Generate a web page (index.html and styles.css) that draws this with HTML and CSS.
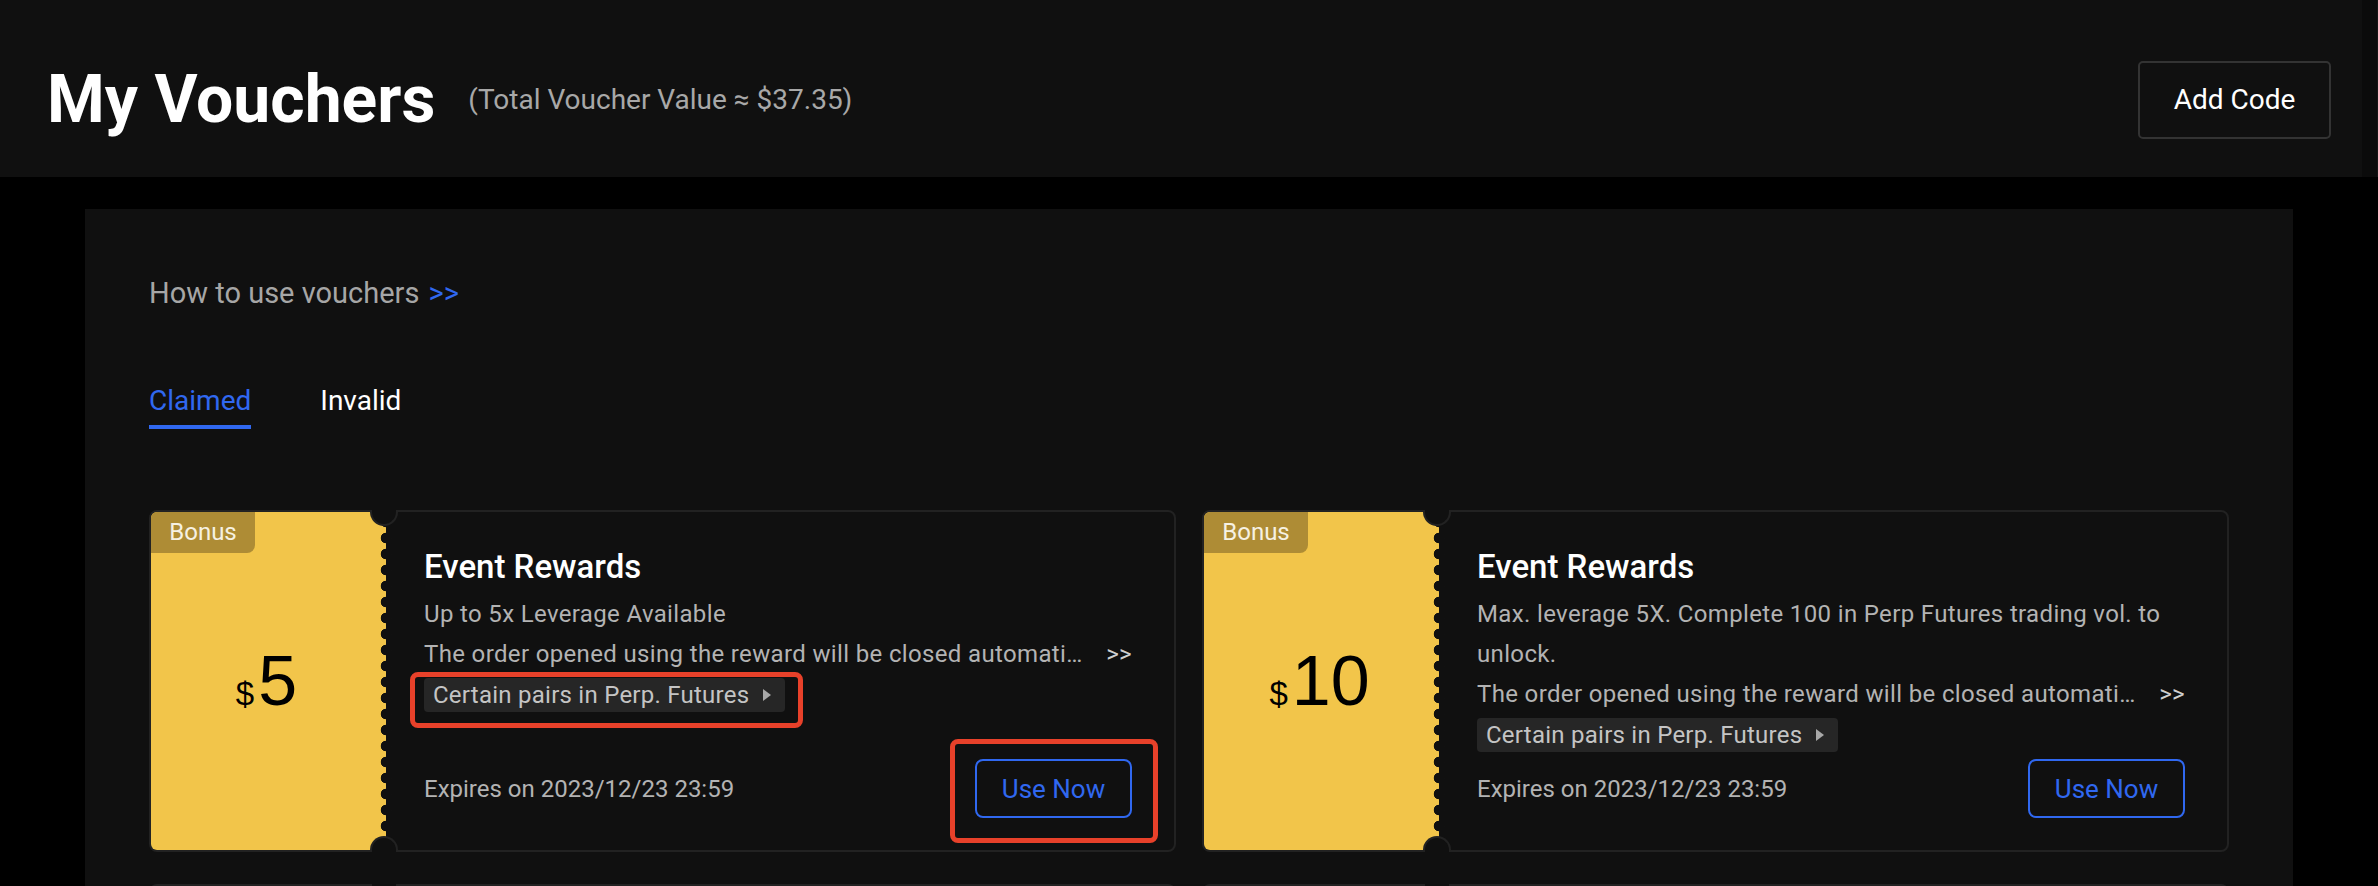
FILE: index.html
```html
<!DOCTYPE html>
<html lang="en">
<head>
<meta charset="utf-8">
<title>My Vouchers</title>
<link rel="stylesheet" href="styles.css">
</head>
<body>
<header class="header">
  <div class="header-inner">
    <h1 class="title">My Vouchers</h1>
    <span class="total">(Total Voucher Value ≈ $37.35)</span>
    <button class="add-code">Add Code</button>
  </div>
  <div class="header-scroll"></div>
</header>

<main class="panel">
  <p class="howto">How to use vouchers <a class="howto-link">&gt;&gt;</a></p>

  <nav class="tabs">
    <span class="tab active">Claimed</span>
    <span class="tab">Invalid</span>
  </nav>

  <section class="cards">
    <article class="card">
      <div class="ticket">
        <span class="bonus">Bonus</span>
        <div class="price"><span class="cur">$</span><span class="amt">5</span></div>
      </div>
      <span class="notch notch-top"></span>
      <span class="notch notch-bottom"></span>
      <div class="body">
        <h2 class="card-title">Event Rewards</h2>
        <p class="desc">Up to 5x Leverage Available</p>
        <div class="desc-row">
          <span class="desc-trunc">The order opened using the reward will be closed automatically when the voucher expires.</span>
          <span class="more">&gt;&gt;</span>
        </div>
        <div class="chip-wrap">
          <span class="chip">Certain pairs in Perp. Futures <span class="tri"></span><span class="annot annot-chip"></span></span>
        </div>
        <div class="footer">
          <span class="expires">Expires on 2023/12/23 23:59</span>
          <button class="use-now">Use Now<span class="annot annot-btn"></span></button>
        </div>
      </div>
    </article>

    <article class="card">
      <div class="ticket">
        <span class="bonus">Bonus</span>
        <div class="price"><span class="cur">$</span><span class="amt">10</span></div>
      </div>
      <span class="notch notch-top"></span>
      <span class="notch notch-bottom"></span>
      <div class="body">
        <h2 class="card-title">Event Rewards</h2>
        <p class="desc">Max. leverage 5X. Complete 100 in Perp Futures trading vol. to unlock.</p>
        <div class="desc-row">
          <span class="desc-trunc">The order opened using the reward will be closed automatically when the voucher expires.</span>
          <span class="more">&gt;&gt;</span>
        </div>
        <div class="chip-wrap">
          <span class="chip">Certain pairs in Perp. Futures <span class="tri"></span></span>
        </div>
        <div class="footer">
          <span class="expires">Expires on 2023/12/23 23:59</span>
          <button class="use-now">Use Now</button>
        </div>
      </div>
    </article>

    <article class="card">
      <div class="ticket">
        <span class="bonus">Bonus</span>
        <div class="price"><span class="cur">$</span><span class="amt">10</span></div>
      </div>
      <span class="notch notch-top"></span>
      <span class="notch notch-bottom"></span>
      <div class="body"></div>
    </article>

    <article class="card">
      <div class="ticket">
        <span class="bonus">Bonus</span>
        <div class="price"><span class="cur">$</span><span class="amt">10</span></div>
      </div>
      <span class="notch notch-top"></span>
      <span class="notch notch-bottom"></span>
      <div class="body"></div>
    </article>
  </section>
</main>
</body>
</html>
```

FILE: styles.css
```css
* { box-sizing: border-box; }

html, body {
  margin: 0;
  padding: 0;
  background: #000;
  height: 886px;
  overflow: hidden;
}

body {
  font-family: Roboto, "Noto Sans", sans-serif;
  color: #fff;
}

.header {
  display: flex;
  height: 177px;
}

.header-inner {
  flex: 1;
  display: flex;
  align-items: center;
  background: #101010;
  padding: 22px 31px 0 47px;
}

.header-scroll {
  width: 16px;
  background: #0b0b0b;
  border-right: 1px solid #151515;
}

.title {
  margin: 0;
  font-size: 66px;
  font-weight: 700;
  line-height: 1;
  letter-spacing: 0;
}

.total {
  margin-left: 33px;
  font-size: 28px;
  color: #a8a8a8;
}

.add-code {
  margin-left: auto;
  width: 193px;
  height: 78px;
  background: transparent;
  border: 2px solid #333;
  border-radius: 5px;
  color: #fff;
  font-family: inherit;
  font-size: 28px;
}

.panel {
  margin: 32px 0 0 85px;
  width: 2208px;
  height: 700px;
  background: #101010;
  padding: 64px 64px 0 64px;
}

.howto {
  margin: 0;
  font-size: 29px;
  line-height: 40px;
  color: #a6a6a6;
}

.howto-link {
  color: #3068f0;
  margin-left: 2px;
}

.tabs {
  display: flex;
  gap: 69px;
  margin-top: 68px;
}

.tab {
  font-size: 28px;
  line-height: 40px;
  padding-bottom: 4px;
  border-bottom: 4px solid transparent;
  color: #fff;
}

.tab.active {
  color: #3068f0;
  border-bottom-color: #3068f0;
}

.cards {
  display: grid;
  grid-template-columns: minmax(0, 1fr) minmax(0, 1fr);
  column-gap: 26px;
  row-gap: 32px;
  margin-top: 81px;
}

.card {
  position: relative;
  display: flex;
  height: 342px;
  border: 2px solid #222;
  border-radius: 8px;
  min-width: 0;
}

.ticket {
  position: relative;
  flex: none;
  width: 235px;
  background: #f2c54a;
  border-radius: 6px 0 0 6px;
  display: flex;
  align-items: center;
  justify-content: center;
}

.ticket::after {
  content: "";
  position: absolute;
  top: 0;
  bottom: 0;
  right: -6px;
  width: 12px;
  background: radial-gradient(circle at 6px 8px, #101010 5px, transparent 5.6px) 0 2px / 12px 16px repeat-y;
}

.bonus {
  position: absolute;
  top: 0;
  left: 0;
  width: 104px;
  height: 41px;
  background: #ae8c35;
  border-radius: 6px 0 8px 0;
  color: #f6f1e2;
  font-size: 24px;
  line-height: 41px;
  text-align: center;
}

.price {
  display: flex;
  align-items: baseline;
  color: #000;
  font-family: "Liberation Sans", Arial, sans-serif;
  margin-right: 4px;
}

.cur {
  font-size: 33px;
  margin-right: 4px;
}

.amt {
  font-size: 70px;
  line-height: 1;
}

.notch {
  position: absolute;
  left: 219px;
  width: 28px;
  height: 16px;
  background: #101010;
  border: 2px solid #222;
  z-index: 2;
}

.notch-top {
  top: -2px;
  border-top: none;
  border-radius: 0 0 14px 14px;
}

.notch-bottom {
  bottom: -2px;
  border-bottom: none;
  border-radius: 14px 14px 0 0;
}

.body {
  flex: 1;
  min-width: 0;
  display: flex;
  flex-direction: column;
  align-items: flex-start;
  padding: 35px 42px 32px 38px;
}

.card-title {
  margin: 0;
  font-size: 33px;
  font-weight: 500;
  line-height: 40px;
  color: #fff;
}

.desc {
  margin: 7px 0 0;
  font-size: 24px;
  letter-spacing: 0.35px;
  line-height: 40px;
  color: #b3b3b3;
}

.desc-row {
  display: flex;
  width: 100%;
  font-size: 24px;
  letter-spacing: 0.35px;
  line-height: 40px;
  color: #b3b3b3;
}

.desc-trunc {
  flex: 1;
  min-width: 0;
  white-space: nowrap;
  overflow: hidden;
  text-overflow: ellipsis;
}

.more {
  margin-left: 18px;
  color: #cfcfcf;
}

.chip-wrap {
  margin-top: 4px;
}

.chip {
  position: relative;
  display: inline-flex;
  align-items: center;
  height: 34px;
  padding: 0 14px 0 9px;
  background: #262626;
  border-radius: 4px;
  font-size: 24px;
  letter-spacing: 0.25px;
  color: #c4c4c4;
}

.tri {
  width: 0;
  height: 0;
  margin-left: 14px;
  border-top: 6px solid transparent;
  border-bottom: 6px solid transparent;
  border-left: 8px solid #a8a8a8;
}

.footer {
  margin-top: auto;
  width: 100%;
  display: flex;
  justify-content: space-between;
  align-items: center;
}

.expires {
  font-size: 24px;
  color: #b3b3b3;
}

.use-now {
  position: relative;
  width: 157px;
  height: 59px;
  background: transparent;
  border: 2px solid #3068f0;
  border-radius: 8px;
  color: #3068f0;
  font-family: inherit;
  font-size: 26px;
}

.annot {
  position: absolute;
  border: 5px solid #e8412a;
  border-radius: 8px;
  pointer-events: none;
}

.annot-chip {
  left: -14px;
  right: -18px;
  top: -6px;
  bottom: -16px;
}

.annot-btn {
  left: -27px;
  right: -28px;
  top: -22px;
  bottom: -27px;
}
```
